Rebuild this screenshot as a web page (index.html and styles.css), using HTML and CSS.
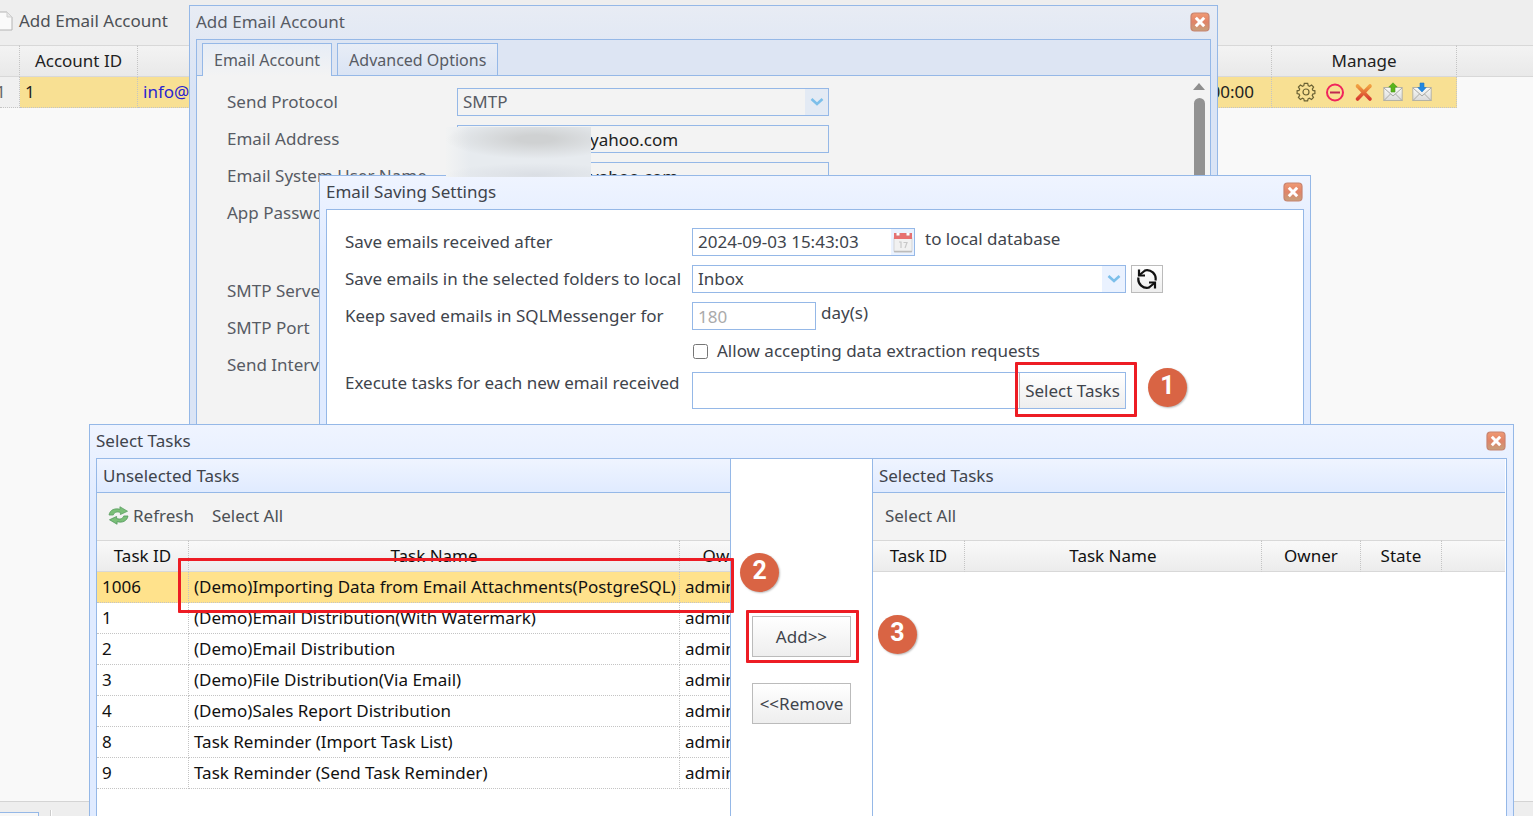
FILE: index.html
```html
<!DOCTYPE html>
<html lang="en">
	<head>
		<meta charset="UTF-8">
		<meta name="viewport" content="width=device-width, initial-scale=1">
		<title>Add Email Account</title>
		<link rel="stylesheet" href="styles.css">
	</head>
	<body>
		<svg class="defs" width="0" height="0" aria-hidden="true">
			<defs>
				<linearGradient id="closeFill" x1="0" y1="0" x2="0" y2="1">
					<stop offset="0" stop-color="#f09a74"/>
					<stop offset="0.5" stop-color="#e08468"/>
					<stop offset="1" stop-color="#c6a17c"/>
				</linearGradient>
				<linearGradient id="crossFill" x1="0" y1="0" x2="0" y2="1">
					<stop offset="0" stop-color="#f0a040"/>
					<stop offset="1" stop-color="#d83c30"/>
				</linearGradient>
				<linearGradient id="mailFill" x1="0" y1="0" x2="0" y2="1">
					<stop offset="0" stop-color="#fbfbf8"/>
					<stop offset="1" stop-color="#d9dadb"/>
				</linearGradient>
				<symbol id="iconClose" viewBox="0 0 20 20">
					<rect x="1" y="1" width="18" height="18" rx="3.500" fill="url(#closeFill)" stroke="#c88470" stroke-width="1.200"/>
					<path d="M5.800 5.800L14.200 14.200M14.200 5.800L5.800 14.200" stroke="#fff" stroke-width="3"/>
				</symbol>
				<symbol id="iconArrow" viewBox="0 0 14 10">
					<path d="M1.500 2L7 7L12.500 2" fill="none" stroke="#7cbfea" stroke-width="2.600"/>
				</symbol>
				<symbol id="iconMail" viewBox="0 0 20 18">
					<rect x="0.800" y="4.500" width="18.400" height="13" fill="url(#mailFill)" stroke="#b5b3a5"/>
					<path d="M1 5L10 13L19 5M1 17.500L7.500 11M19 17.500L12.500 11" fill="none" stroke="#a9a9a5"/>
				</symbol>
			</defs>
		</svg>
		<div class="desktop">
<!-- account list -->
			<div class="toolbar">
				<button type="button" class="tool-button">
					<svg class="icon-page" viewBox="0 0 18 20"><path d="M1 1H12L17 6V19H1Z" fill="#fafafa" stroke="#b4b4b4" stroke-linejoin="round"/><path d="M12 1V6H17" fill="#e8e8e8" stroke="#cfcfcf"/></svg>
					<span>Add Email Account</span>
				</button>
			</div>
			<table class="grid grid-accounts">
				<colgroup><col class="col-rownum"><col class="col-account"><col><col class="col-manage"><col class="col-rest"></colgroup>
				<thead>
					<tr><th></th><th>Account ID</th><th></th><th>Manage</th><th></th></tr>
				</thead>
				<tbody>
					<tr class="selected">
						<td class="rownum">1</td>
						<td>1</td>
						<td><div class="spread"><a href="#">info@</a><span>00:00</span></div></td>
						<td>
							<div class="manage">
								<button type="button" aria-label="Settings"><svg viewBox="0 0 20 20" fill="none" stroke="#6b6234" stroke-width="1.200"><path d="M8.300 1.400h3.400l.5 2.300 1.300.6 2.100-1.300 2 2-1.300 2.100.6 1.300 2 .4v2.800l-2.100.5-.6 1.300 1.300 2.100-2 2-2.100-1.300-1.300.6-.5 2.100H8.300l-.5-2.100-1.300-.6-2.100 1.300-2-2 1.300-2.100-.6-1.300-2-.5V8.800l2-.4.6-1.300-1.300-2.100 2-2 2.100 1.300 1.300-.6z"/><circle cx="10" cy="10" r="3"/></svg></button>
								<button type="button" aria-label="Disable"><svg viewBox="0 0 20 20" fill="none" stroke="#f0245c" stroke-width="2"><circle cx="10" cy="10.500" r="8"/><path d="M5 10.500H15" stroke="#c02850"/></svg></button>
								<button type="button" aria-label="Delete"><svg viewBox="0 0 20 20" fill="none" stroke="url(#crossFill)" stroke-width="3.600" stroke-linecap="round"><path d="M3.500 4L16 17"/><path d="M16 4L3.500 17"/></svg></button>
								<button type="button" aria-label="Send"><svg viewBox="0 0 20 20"><use href="#iconMail" y="1" width="20" height="18"/><path d="M10 0.800L14.200 5H12V10H8V5H5.800Z" fill="#58b41c" stroke="#4a9c18" stroke-width="0.600"/></svg></button>
								<button type="button" aria-label="Receive"><svg viewBox="0 0 20 20"><use href="#iconMail" y="1" width="20" height="18"/><path d="M8 1H12V5.500H14.200L10 10L5.800 5.500H8Z" fill="#2288e0" stroke="#1c78c8" stroke-width="0.600"/></svg></button>
							</div>
						</td>
						<td class="rest"></td>
					</tr>
				</tbody>
			</table>
			<div class="pager">
				<select class="pager-size" aria-label="Page size"></select>
				<span class="pager-line"></span>
			</div>
<!-- add email account -->
			<section class="window window-account">
				<header class="window-head">
					<span>Add Email Account</span>
					<button type="button" class="window-close" aria-label="Close"><svg viewBox="0 0 20 20"><use href="#iconClose"/></svg></button>
				</header>
				<div class="window-body">
					<nav class="tabs">
						<button type="button" class="tab tab-on">Email Account</button>
						<button type="button" class="tab">Advanced Options</button>
					</nav>
					<div class="account-pane">
						<form class="form form-account">
							<label for="protocol">Send Protocol</label>
							<div class="combo"><select id="protocol"><option>SMTP</option></select><span class="combo-arrow"><svg viewBox="0 0 14 10"><use href="#iconArrow"/></svg></span></div>
							<label for="address">Email Address</label>
							<input id="address" class="field field-mail" type="text" value="yahoo.com">
							<label for="userName">Email System User Name</label>
							<input id="userName" class="field field-mail" type="text" value="yahoo.com">
							<label for="password">App Password</label>
							<input id="password" class="field" type="password">
							<label for="server" class="form-next">SMTP Server</label>
							<input id="server" class="field form-next" type="text">
							<label for="port">SMTP Port</label>
							<input id="port" class="field" type="text">
							<label for="interval">Send Interval</label>
							<input id="interval" class="field" type="text">
						</form>
						<div class="scrollbar">
							<svg viewBox="0 0 12 7"><path d="M0 7L6 0L12 7Z" fill="#8e8e8e"/></svg>
							<span class="scrollbar-thumb"></span>
						</div>
					</div>
				</div>
			</section>
<!-- email saving settings -->
			<section class="window window-saving">
				<header class="window-head">
					<span>Email Saving Settings</span>
					<button type="button" class="window-close" aria-label="Close"><svg viewBox="0 0 20 20"><use href="#iconClose"/></svg></button>
				</header>
				<div class="window-body">
					<form class="form form-saving">
						<label for="after">Save emails received after</label>
						<div class="form-line">
							<div class="datebox">
								<input id="after" type="text" value="2024-09-03 15:43:03">
								<span class="datebox-icon">
									<svg viewBox="0 0 20 21"><rect x="1" y="5" width="18" height="15" rx="1" fill="#f1f1f1" stroke="#d5d5d5"/><path d="M1 1H19V7H1Z" fill="#e87070"/><path d="M3 1V4H7V1M13 1V4H17V1" fill="#fff" stroke="#d87878"/><path d="M6 10H8V16M10.500 10.500H14L12 16" fill="none" stroke="#c8c8c8" stroke-width="1.200"/><path d="M1 19.500H19" stroke="#bbb" stroke-width="1.500"/></svg>
								</span>
							</div>
							<span class="form-note">to local database</span>
						</div>
						<label for="folders">Save emails in the selected folders to local</label>
						<div class="form-line">
							<div class="combo combo-folders"><select id="folders"><option>Inbox</option></select><span class="combo-arrow"><svg viewBox="0 0 14 10"><use href="#iconArrow"/></svg></span></div>
							<button type="button" class="button button-sync" aria-label="Reload folders">
								<svg viewBox="0 0 22 22" fill="none" stroke="#111" stroke-width="2.200"><path d="M8.500 2.500A8.700 8.700 0 0 1 19.500 12.500"/><path d="M13.500 19.500A8.700 8.700 0 0 1 2.500 9.500"/><path d="M3 1.500V7.500H9M19 20.500V14.500H13"/><path d="M3.500 7L9 2.500M18.500 15L13 19.500"/></svg>
							</button>
						</div>
						<label for="keep">Keep saved emails in SQLMessenger for</label>
						<div class="form-line">
							<input id="keep" class="field field-days" type="text" value="180" disabled>
							<span>day(s)</span>
						</div>
						<div class="form-check">
							<input id="allow" type="checkbox">
							<label for="allow">Allow accepting data extraction requests</label>
						</div>
						<label for="tasks" class="label-tasks">Execute tasks for each new email received</label>
						<div class="form-line">
							<div class="taskbox">
								<input id="tasks" type="text">
								<button type="button" class="button">Select Tasks</button>
								<span class="mark mark-select"></span>
								<span class="badge badge-select">1</span>
							</div>
						</div>
					</form>
				</div>
			</section>
			<div class="smudge"></div>
<!-- select tasks -->
			<section class="window window-tasks">
				<header class="window-head">
					<span>Select Tasks</span>
					<button type="button" class="window-close" aria-label="Close"><svg viewBox="0 0 20 20"><use href="#iconClose"/></svg></button>
				</header>
				<div class="window-body picker">
					<div class="panel">
						<div class="panel-head">Unselected Tasks</div>
						<div class="panel-tools">
							<button type="button" class="tool-button">
								<svg class="icon-refresh" viewBox="0 0 22 20"><path d="M1 9.500C2 4 7 2 12.500 3.500V0.800L20.500 5.500L13 9V6.800C8.500 5.500 6.500 7 5.500 9.500Z" fill="#7abf78" stroke="#5a9c60" stroke-width="0.800"/><path d="M21 10.500C20 16 15 18 9.500 16.500V19.200L1.500 14.500L9 11V13.200C13.500 14.500 15.500 13 16.500 10.500Z" fill="#7abf78" stroke="#4e9458" stroke-width="0.800"/></svg>
								<span>Refresh</span>
							</button>
							<button type="button" class="tool-button">Select All</button>
						</div>
						<table class="grid grid-tasks">
							<colgroup><col class="col-task"><col class="col-name"><col class="col-owner"></colgroup>
							<thead>
								<tr><th>Task ID</th><th>Task Name</th><th>Owner</th></tr>
							</thead>
							<tbody>
								<tr class="selected"><td>1006</td><td>(Demo)Importing Data from Email Attachments(PostgreSQL)</td><td>admin</td></tr>
								<tr><td>1</td><td>(Demo)Email Distribution(With Watermark)</td><td>admin</td></tr>
								<tr><td>2</td><td>(Demo)Email Distribution</td><td>admin</td></tr>
								<tr><td>3</td><td>(Demo)File Distribution(Via Email)</td><td>admin</td></tr>
								<tr><td>4</td><td>(Demo)Sales Report Distribution</td><td>admin</td></tr>
								<tr><td>8</td><td>Task Reminder (Import Task List)</td><td>admin</td></tr>
								<tr><td>9</td><td>Task Reminder (Send Task Reminder)</td><td>admin</td></tr>
							</tbody>
						</table>
					</div>
					<div class="moves">
						<div class="move">
							<button type="button" class="button">Add&gt;&gt;</button>
							<span class="mark mark-add"></span>
							<span class="badge badge-add">3</span>
						</div>
						<div class="move">
							<button type="button" class="button">&lt;&lt;Remove</button>
						</div>
					</div>
					<div class="panel">
						<div class="panel-head">Selected Tasks</div>
						<div class="panel-tools">
							<button type="button" class="tool-button">Select All</button>
						</div>
						<table class="grid grid-chosen">
							<colgroup><col class="col-task"><col class="col-title"><col class="col-owner"><col class="col-state"><col></colgroup>
							<thead>
								<tr><th>Task ID</th><th>Task Name</th><th>Owner</th><th>State</th><th></th></tr>
							</thead>
						</table>
					</div>
					<span class="mark mark-row"></span>
					<span class="badge badge-row">2</span>
				</div>
			</section>
		</div>
	</body>
</html>
```
FILE: styles.css
```css
*{box-sizing: border-box;}
body{margin: 0px; background: #f9f9f9; color: #40444c; font-family: "Noto Sans", "Open Sans", sans-serif; font-size: 17px; line-height: 22px;}
button, input, select{font: inherit; color: inherit; margin: 0px;}
button{cursor: pointer;}
svg{display: block;}
.defs{position: absolute;}
.desktop{position: relative; display: flex; flex-direction: column; height: 100vh; overflow: hidden;}

/* toolbar and grids */
.toolbar{display: flex; align-items: center; height: 45px; padding-bottom: 4px; background: #eee;}
.tool-button{display: flex; align-items: center; gap: 4px; padding: 0px; border: 0px; background: none; color: #4c5055; white-space: nowrap;}
.toolbar .tool-button{margin-left: -5px; gap: 6px;}
.icon-page{width: 18px; height: 20px;}
.icon-refresh{width: 21px; height: 19px;}
.grid{width: 100%; table-layout: fixed; border-collapse: separate; border-spacing: 0px; color: #111;}
.grid th{height: 32px; padding: 0px 5px; border-top: 1px solid #d8d8d8; border-bottom: 1px solid #d8d8d8; border-right: 1px dotted #c4c4c4; background: linear-gradient(#f9f9f9, #ececec); font-weight: normal; white-space: nowrap;}
.grid td{height: 31px; padding: 0px 5px; border-right: 1px dotted #c4c4c4; border-bottom: 1px dotted #c4c4c4; white-space: nowrap; overflow: hidden;}
.grid th:last-child{border-right: 0px;}
.selected td{background: #ffe28c;}
.grid-accounts{color: #222;}
.grid-accounts th{background: linear-gradient(#f3f3f3, #e9e9e9);}
.grid-accounts .selected td{background: #f8e093;}
.grid-accounts .selected .rownum{padding: 0px; background: #f0f0f0; color: #666; text-indent: -4px;}
.grid-accounts .selected .rest{border: 0px; background: none;}
.grid-accounts a{color: #2a24d0; text-decoration: none;}
.col-rownum{width: 20px;}
.col-account{width: 118px;}
.col-manage{width: 185px;}
.col-rest{width: 76px;}
.spread{display: flex; justify-content: space-between; padding-right: 12px;}
.manage{display: flex; justify-content: center; gap: 9px;}
.manage button{padding: 0px; border: 0px; background: none;}
.manage svg{width: 20px; height: 20px;}
.pager{display: flex; gap: 11px; height: 15px; margin-top: auto; padding-top: 8px; border-top: 1px solid #d4d4d4; background: #eee; overflow: hidden;}
.pager-size{width: 39px; height: 24px; border: 1px solid #95b8e7; border-left: 0px; background: #f7f7f7; appearance: none; margin-top: 2px;}
.pager-line{width: 2px; height: 24px; border-left: 1px solid #ccc; border-right: 1px solid #fff;}

/* windows */
.window{position: absolute; bottom: 0px; display: flex; flex-direction: column; padding: 0px 6px; border: 1px solid #95b8e7; border-bottom: 0px; background: linear-gradient(#eff4ff, #e0ebff 80px);}
.window-head{display: flex; justify-content: space-between; align-items: center; height: 33px; padding: 0px 1px 2px 0px; flex: none;}
.window-close{width: 20px; height: 20px; padding: 0px; border: 0px; background: none;}
.window-close svg{width: 20px; height: 20px;}
.window-body{flex: 1; min-height: 0px; border: 1px solid #95b8e7; border-bottom: 0px; background: #fff; overflow: hidden;}
.window-account{left: 189px; right: 315px; top: 5px; background: linear-gradient(#e8ecf4, #dae4f5 80px); color: #575b64;}
.window-saving{left: 319px; right: 222px; top: 175px;}
.window-tasks{left: 89px; right: 19px; top: 424px;}
.window-account .window-body{display: flex; flex-direction: column; background: #f3f3f3;}

/* tabs */
.tabs{display: flex; gap: 5px; height: 36px; padding: 3px 5px 0px; border-bottom: 1px solid #95b8e7; background: #dde5f3;}
.tab{height: 32px; padding: 0px 11px; border: 1px solid #95b8e7; border-bottom: 0px; background: linear-gradient(#e8edf6, #dae4f4); font-size: 16px;}
.tab-on{height: 33px; background: linear-gradient(#e7edf6, #f3f3f3);}
.account-pane{display: flex; justify-content: space-between; flex: 1; min-height: 0px; padding: 12px 0px 0px 30px;}
.scrollbar{display: flex; flex-direction: column; align-items: center; gap: 8px; width: 20px; margin: -5px 1px 0px 0px;}
.scrollbar svg{flex: none; width: 12px; height: 7px;}
.scrollbar-thumb{flex: 1; width: 11px; border-radius: 6px 6px 0px 0px; background: #929292;}

/* forms */
.form{display: grid; grid-auto-rows: 28px; row-gap: 9px; align-items: center; align-content: start;}
.form-account{grid-template-columns: 230px 372px; grid-template-rows: repeat(4, 28px) 69px;}
.form-account .form-next{align-self: end;}
.form-saving{grid-template-columns: 347px 1fr; grid-template-rows: repeat(3, 28px) 24px 37px; padding: 18px;}
.form-line{display: flex; align-items: flex-start; gap: 5px;}
.form-note{padding-left: 5px;}
.form-check{grid-column: 2; display: flex; align-items: center; gap: 9px;}
.form-check input{width: 15px; height: 15px; margin-left: 1px;}
.label-tasks{align-self: start;}
.field{height: 28px; padding: 0px 5px; border: 1px solid #95b8e7; background: none;}
label.form-next{line-height: 28px;}
.field-mail{padding-left: 132px; color: #222;}
.field-days{width: 124px;}
.field-days:disabled{color: #aaa;}
.combo{position: relative; height: 28px; border: 1px solid #95b8e7;}
.combo-folders{width: 434px;}
.combo select{width: 100%; height: 26px; padding: 0px 5px; border: 0px; background: none; appearance: none;}
.combo-arrow{position: absolute; right: 0px; top: 0px; bottom: 0px; display: flex; justify-content: center; align-items: center; width: 23px; background: #eaf2ff; pointer-events: none;}
.combo-arrow svg{width: 14px; height: 10px;}
.window-account .combo-arrow{background: #e3eaf4;}
.datebox{display: flex; width: 223px; height: 28px; border: 1px solid #95b8e7;}
.datebox input{flex: 1; min-width: 0px; padding: 0px 5px; border: 0px; background: none;}
.datebox-icon{display: flex; justify-content: center; align-items: center; width: 23px; background: #eaf2ff;}
.datebox-icon svg{width: 20px; height: 21px;}
.button{padding: 0px; border: 1px solid #bbb; background: linear-gradient(#fff, #eee); white-space: nowrap;}
.button-sync{display: flex; justify-content: center; align-items: center; width: 32px; height: 28px;}
.button-sync svg{width: 22px; height: 22px;}
.taskbox{position: relative; display: flex; width: 434px; height: 37px; border: 1px solid #95b8e7;}
.taskbox input{flex: 1; min-width: 0px; border: 0px; background: none;}
.taskbox .button{width: 106px; border-width: 0px 0px 0px 1px;}

/* task picker */
.window-tasks .picker{position: relative; display: grid; grid-template-columns: 9fr 2fr 9fr; overflow: visible;}
.panel{min-width: 0px; overflow: hidden;}
.panel:first-child{border-right: 1px solid #95b8e7;}
.moves + .panel{border-left: 1px solid #95b8e7; border-right: 1px solid #fff;}
.panel-head{height: 34px; padding: 6px; border-bottom: 1px solid #95b8e7; background: linear-gradient(#eff4ff, #e0ebff);}
.panel-tools{display: flex; align-items: center; gap: 20px; height: 47px; padding: 0px 12px 2px; background: #f3f3f3;}
.panel:first-child .panel-tools{gap: 18px; padding-left: 11px;}
.grid-tasks{width: 682px;}
.col-task{width: 92px;}
.col-name{width: 491px;}
.col-title{width: 297px;}
.col-owner{width: 99px;}
.col-state{width: 81px;}
.moves{display: flex; flex-direction: column; align-items: center; gap: 26px; padding-top: 157px;}
.move{position: relative;}
.move .button{width: 99px; height: 41px;}

/* step marks */
.mark{position: absolute; border: 3px solid #ed1c24; border-radius: 1px; pointer-events: none;}
.mark-select{left: 322px; right: -12px; top: -11px; bottom: -9px;}
.mark-add{left: -6px; right: -8px; top: -6px; bottom: -6px;}
.mark-row{left: 81px; right: calc(55% - 3px); top: 99px; height: 55px;}
.badge{position: absolute; display: flex; justify-content: center; align-items: center; width: 39px; height: 39px; padding-bottom: 3px; border-radius: 50%; background: #d96444; box-shadow: 1px 1px 2px #bbb; color: #fff; font-family: Roboto, sans-serif; font-size: 25px; font-weight: bold;}
.badge-select{left: 455px; top: -5px;}
.badge-add{left: 126px; top: -1px;}
.badge-row{left: calc(45% + 9px); top: 94px;}
.smudge{position: absolute; left: 446px; top: 127px; width: 145px; height: 50px; background: radial-gradient(ellipse 90px 20px at 90px 12px, #cfd1d2 20%, transparent), radial-gradient(ellipse 90px 12px at 90px 48px, #dadee4, transparent), linear-gradient(90deg, #f2f3f3, #e7ebef 24px);}
```
